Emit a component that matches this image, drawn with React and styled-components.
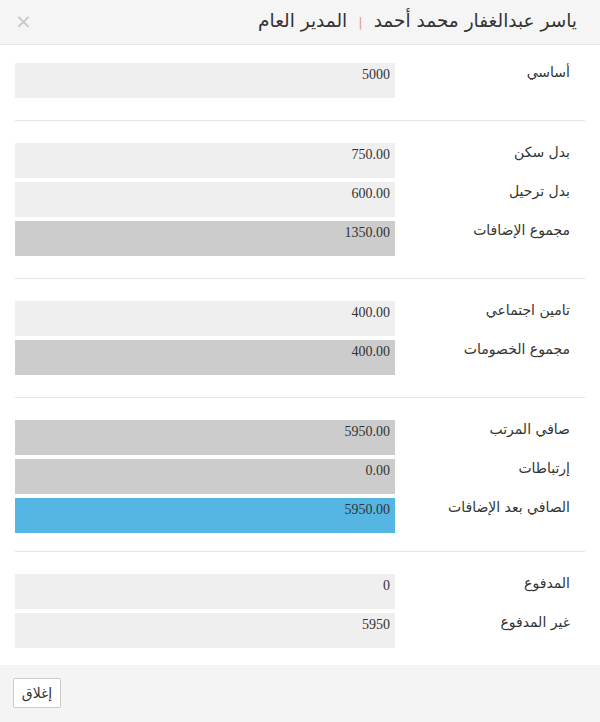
import React from 'react';
import styled, { createGlobalStyle } from 'styled-components';

const GlobalStyle = createGlobalStyle`
  body {
    margin: 0;
    background: #fff;
    font-family: 'DejaVu Sans', 'Noto Sans', sans-serif;
  }
`;

const Modal = styled.div`
  width: 600px;
  height: 722px;
  display: flex;
  flex-direction: column;
  direction: rtl;
  background: #fff;
`;

const Header = styled.div`
  height: 45px;
  display: flex;
  align-items: center;
  justify-content: space-between;
  padding: 0 23px 3px 15px;
  box-sizing: border-box;
  background: #f5f5f5;
  border-bottom: 1px solid #e5e5e5;
`;

const Title = styled.h4`
  margin: 0;
  font-size: 18.5px;
  font-weight: normal;
  color: #333;

  span {
    color: #e0a070;
    margin: 0 11px;
    font-size: 13px;
  }
`;

const Close = styled.button`
  border: 0;
  background: none;
  padding: 0;
  color: #c8c8c8;
  font-size: 20px;
  line-height: 1;
  font-family: 'DejaVu Sans', sans-serif;
`;

const Body = styled.div`
  flex: 1;
  padding: 18px 15px 17px;
`;

const Row = styled.div`
  display: grid;
  grid-template-columns: 190px 380px;
  & + & {
    margin-top: 4px;
  }
`;

const Label = styled.div`
  padding: 0 15px 0 0;
  font-size: 14px;
  line-height: 18px;
  color: #333;
`;

const fills = { light: '#efefef', dark: '#cccccc', blue: '#55b5e3' };

const Value = styled.div`
  height: 35px;
  box-sizing: border-box;
  padding: 2px 5px 0;
  background: ${(p) => fills[p.$tone]};
  font-family: 'Liberation Serif', serif;
  font-size: 14px;
  line-height: 20px;
  color: #333;
  text-align: right;
  direction: ltr;
`;

const Divider = styled.hr`
  margin: ${(p) => (p.$tight ? 18 : 22)}px 0 22px;
  border: 0;
  border-top: 1px solid #e5e5e5;
`;

const Footer = styled.div`
  height: 57px;
  box-sizing: border-box;
  padding: 13px;
  background: #f4f4f4;
  display: flex;
  justify-content: flex-end;
  align-items: flex-start;
`;

const Button = styled.button`
  width: 48px;
  height: 30px;
  background: #fff;
  border: 1px solid #ccc;
  border-radius: 2px;
  font-family: 'DejaVu Sans', sans-serif;
  font-size: 14px;
  color: #333;
  padding: 0;
`;

const groups = [
  [['أساسي', '5000', 'light']],
  [
    ['بدل سكن', '750.00', 'light'],
    ['بدل ترحيل', '600.00', 'light'],
    ['مجموع الإضافات', '1350.00', 'dark'],
  ],
  [
    ['تامين اجتماعي', '400.00', 'light'],
    ['مجموع الخصومات', '400.00', 'dark'],
  ],
  [
    ['صافي المرتب', '5950.00', 'dark'],
    ['إرتباطات', '0.00', 'dark'],
    ['الصافي بعد الإضافات', '5950.00', 'blue'],
  ],
  [
    ['المدفوع', '0', 'light'],
    ['غير المدفوع', '5950', 'light'],
  ],
];

export default function App() {
  return (
    <>
      <GlobalStyle />
      <Modal>
        <Header>
          <Title>
            ياسر عبدالغفار محمد أحمد<span>|</span>المدير العام
          </Title>
          <Close>×</Close>
        </Header>
        <Body>
          {groups.map((rows, i) => (
            <React.Fragment key={i}>
              {i > 0 && <Divider $tight={i === groups.length - 1} />}
              {rows.map(([label, value, tone]) => (
                <Row key={label}>
                  <Label>{label}</Label>
                  <Value $tone={tone}>{value}</Value>
                </Row>
              ))}
            </React.Fragment>
          ))}
        </Body>
        <Footer>
          <Button>إغلاق</Button>
        </Footer>
      </Modal>
    </>
  );
}
